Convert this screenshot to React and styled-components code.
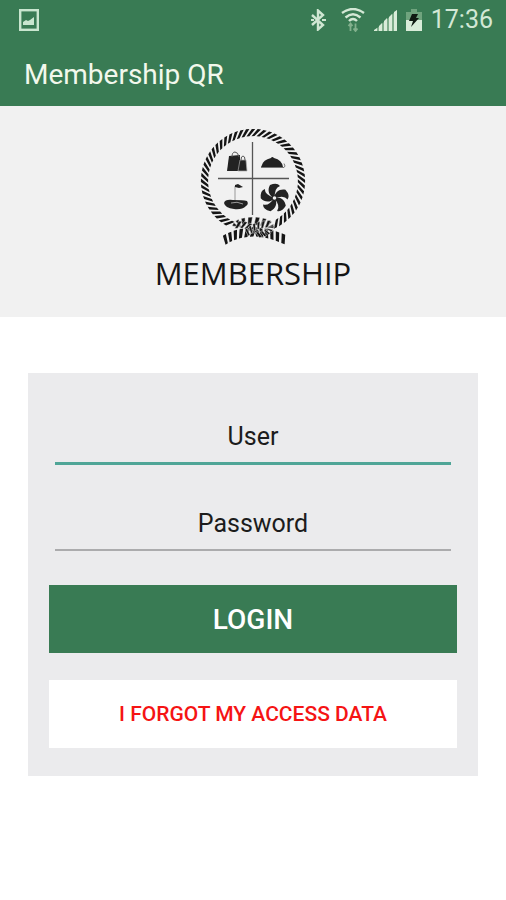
import styled, { createGlobalStyle } from 'styled-components';

export default function App() {
    return (
        <>
            <GlobalStyle />
            <Header>
                <StatusBar>
                    <PictureIcon />
                    <StatusIcons>
                        <BluetoothIcon />
                        <WifiIcon />
                        <SignalIcon />
                        <BatteryIcon />
                        <Clock>17:36</Clock>
                    </StatusIcons>
                </StatusBar>
                <AppTitle>Membership QR</AppTitle>
            </Header>
            <Banner>
                <Emblem />
                <BrandName>MEMBERSHIP</BrandName>
            </Banner>
            <LoginForm onSubmit={(event) => event.preventDefault()}>
                <Field type="text" placeholder="User" aria-label="User" $active />
                <Field type="password" placeholder="Password" aria-label="Password" />
                <LoginButton type="submit">LOGIN</LoginButton>
                <ForgotButton type="button">I FORGOT MY ACCESS DATA</ForgotButton>
            </LoginForm>
        </>
    )
}

function PictureIcon() {
    return (
        <svg width="20" height="22" viewBox="0 0 20 22">
            <rect x="1.2" y="1.2" width="17.6" height="19.6" fill="none" stroke="#c9e6cf" strokeWidth="2.4" />
            <path d="M4 16v-3l3-2 2 1 2-1 4-3v8z" fill="#c9e6cf" />
        </svg>
    )
}

function BluetoothIcon() {
    return (
        <svg width="22" height="22" viewBox="0 0 22 22">
            <path d="M2 6l11 10-5 4.5V1.5L13 6 2 16" fill="none" stroke="#cfe6d2" strokeWidth="2.4" />
            <path d="M1 11h3M12 11h4" stroke="#cfe6d2" strokeWidth="2.2" />
        </svg>
    )
}

function WifiIcon() {
    return (
        <svg width="24" height="24" viewBox="0 0 24 24">
            <g fill="none" stroke="#d3e8d5" strokeWidth="2.4">
                <path d="M1 5Q12-3 23 5" />
                <path d="M4.5 9.5Q12 3 19.5 9.5" />
                <path d="M8 13Q12 9 16 13" />
            </g>
            <path d="M9.5 23v-7M7.5 18l2-2.5 2 2.5M14.5 15.5v7M12.5 20.5l2 2.5 2-2.5" fill="none" stroke="#82b08d" strokeWidth="1.8" />
        </svg>
    )
}

function SignalIcon() {
    return (
        <svg width="23" height="23" viewBox="0 0 23 23">
            <path d="M0 22L23 1v21z" fill="#7fae8b" />
            <path d="M0 22v-1l3-2v3zM5 22v-5l3-3v8zM10 22V12l3-3v13zM15 22V8l3-3v17zM20 22V3l3-2v21z" fill="#d9ecd9" />
        </svg>
    )
}

function BatteryIcon() {
    return (
        <svg width="16" height="22" viewBox="0 0 16 22">
            <path d="M5 0h6v3h5v8H0V3h5z" fill="#70a47e" />
            <path d="M0 11h16v11H0z" fill="#d9ecd9" />
            <path d="M6 5h6l-2 4h3L5 18l2-6H3z" fill="#101a12" />
        </svg>
    )
}

// Point at a distance from the curve, measured along its normal
function offset(point, t, distance) {
    const [x, y] = point(t);
    const [x2, y2] = point(t + 0.001);
    const length = Math.hypot(x2 - x, y2 - y);
    const px = x + ((y2 - y) / length) * distance;
    const py = y - ((x2 - x) / length) * distance;
    return `${px.toFixed(2)} ${py.toFixed(2)}`;
}

// Slanted strands laid across a curve, which read as twisted rope
function twist(point, count, half, lean) {
    let path = '';
    const step = 1 / count;
    for (let i = 0; i < count; i++) {
        const t = (i + 0.25) * step;
        const end = t + step * 0.58;
        const shift = lean * step;
        path += `M${offset(point, t - shift, -half)}L${offset(point, t + shift, half)}`;
        path += `L${offset(point, end + shift, half)}L${offset(point, end - shift, -half)}z`;
    }
    return path;
}

function arc(cx, cy, rx, ry, from, to) {
    return (t) => {
        const angle = ((from + (to - from) * t) * Math.PI) / 180;
        return [cx + rx * Math.cos(angle), cy + ry * Math.sin(angle)];
    };
}

function curve(a, b, c) {
    return (t) => [0, 1].map((k) => (1 - t) ** 2 * a[k] + 2 * t * (1 - t) * b[k] + t ** 2 * c[k]);
}

function Emblem() {
    return (
        <svg width="112" height="120" viewBox="7 7 112 120" role="img" aria-label="Membership emblem">
            <path d="M62.5 22v73M28 58.5h71" fill="none" stroke="#555" strokeWidth="1.3" />
            <g fill="#151515">
                <path d={twist(arc(63, 61, 48.5, 48.5, 116, 424), 48, 3.6, 0.55)} />
                <path d={twist(curve([33, 121], [46, 112], [66, 112]), 6, 4.5, 0.25)} />
                <path d={twist(curve([64, 112], [78, 112], [96, 120]), 6, 4.5, -0.25)} />
            </g>
            <g fill="#151515" stroke="#f1f1f1" strokeWidth=".5">
                <path d={twist(arc(63, 107, 17, 6, 175, 365), 8, 4, 0.1)} />
                <path d={twist(curve([45, 105], [60, 103], [66, 113]), 5, 3.5, 0.4)} />
                <path d={twist(curve([56, 114], [64, 104], [80, 104]), 6, 3.5, 0.3)} />
                <path d={twist(curve([66, 115], [80, 114], [81, 106]), 5, 3, -0.3)} />
            </g>
            <g fill="#222">
                <path d="M39 36l11-1v16H37z" />
                <path d="M50 40h6l1 11H48z" stroke="#aaa" strokeWidth=".7" />
                <path d="M42 37q0-5 3-5t4 5M51 40q0-4 2-4t2 4" fill="none" stroke="#555" strokeWidth="1" />
                <path d="M72 45q1-5 9-7 1-2 3 0 8 2 9 9H71z" />
                <path d="M71 47.5h23q2-1 0-4" fill="none" stroke="#777" strokeWidth="1" />
                <path d="M45 66v17" stroke="#999" strokeWidth="1" />
                <path d="M45 65l3-1 5 3-4 1-4-1z" />
                <path d="M34 83q1-4 9-3 10 0 14 1 2 3-1 5-4 4-12 3-9-1-10-6z" />
                <path d="M41 83q6-2 12 1" fill="none" stroke="#bbb" strokeWidth=".8" />
                {[0, 72, 144, 216, 288].map((angle) => (
                    <path
                        key={angle}
                        d="M84 78C79 76 77 70 80 65q7-3 10 1-6 2-5 12z"
                        transform={`rotate(${angle} 84.5 78)`}
                    />
                ))}
            </g>
            <circle cx="84.5" cy="78" r="1.8" fill="#f1f1f1" />
        </svg>
    )
}

const GlobalStyle = createGlobalStyle`
    * {
        box-sizing: border-box;
    }

    body {
        margin: 0;
        background-color: #FFFFFF;
        font-family: Roboto, sans-serif;
    }
`;

const Header = styled.header`
    background-color: #397B54;
`;

const StatusBar = styled.div`
    height: 40px;
    padding: 0 13px 0 19px;
    display: flex;
    justify-content: space-between;
    align-items: center;
`;

const StatusIcons = styled.div`
    display: flex;
    align-items: center;
    gap: 9px;
`;

const Clock = styled.span`
    font-size: 25px;
    line-height: 40px;
    color: #D3E8D5;
`;

const AppTitle = styled.h1`
    margin: 0;
    padding: 19px 24px 15px;
    font-size: 28px;
    font-weight: 400;
    line-height: 32px;
    color: #F2F8EC;
`;

const Banner = styled.section`
    padding: 21px 0 24px;
    background-color: #F1F1F1;
    display: flex;
    flex-direction: column;
    align-items: center;
`;

const BrandName = styled.p`
    margin: 6px 0 0;
    font-family: "Open Sans", sans-serif;
    font-size: 31px;
    line-height: 40px;
    color: #151515;
`;

const LoginForm = styled.form`
    margin: 56px 28px;
    padding: 38px 21px 28px;
    background-color: #EBEBED;
    display: flex;
    flex-direction: column;
`;

const Field = styled.input`
    height: 54px;
    margin: 0 6px 32px;
    padding: 0;
    border: none;
    border-bottom: ${(props) => (props.$active ? '3px solid #4FA597' : '2px solid #ABABAD')};
    border-radius: 0;
    background: none;
    font-family: inherit;
    font-size: 25px;
    text-align: center;
    color: #1C1C1C;
    outline: none;

    &::placeholder {
        color: #1C1C1C;
        opacity: 1;
    }
`;

const Button = styled.button`
    height: 68px;
    padding: 0;
    border: none;
    font-family: inherit;
    font-weight: 500;
    cursor: pointer;
`;

const LoginButton = styled(Button)`
    margin: 2px 0 27px;
    background-color: #397B54;
    font-size: 28px;
    color: #FFFFFF;
`;

const ForgotButton = styled(Button)`
    background-color: #FFFFFF;
    font-size: 21px;
    color: #F51414;
`;
